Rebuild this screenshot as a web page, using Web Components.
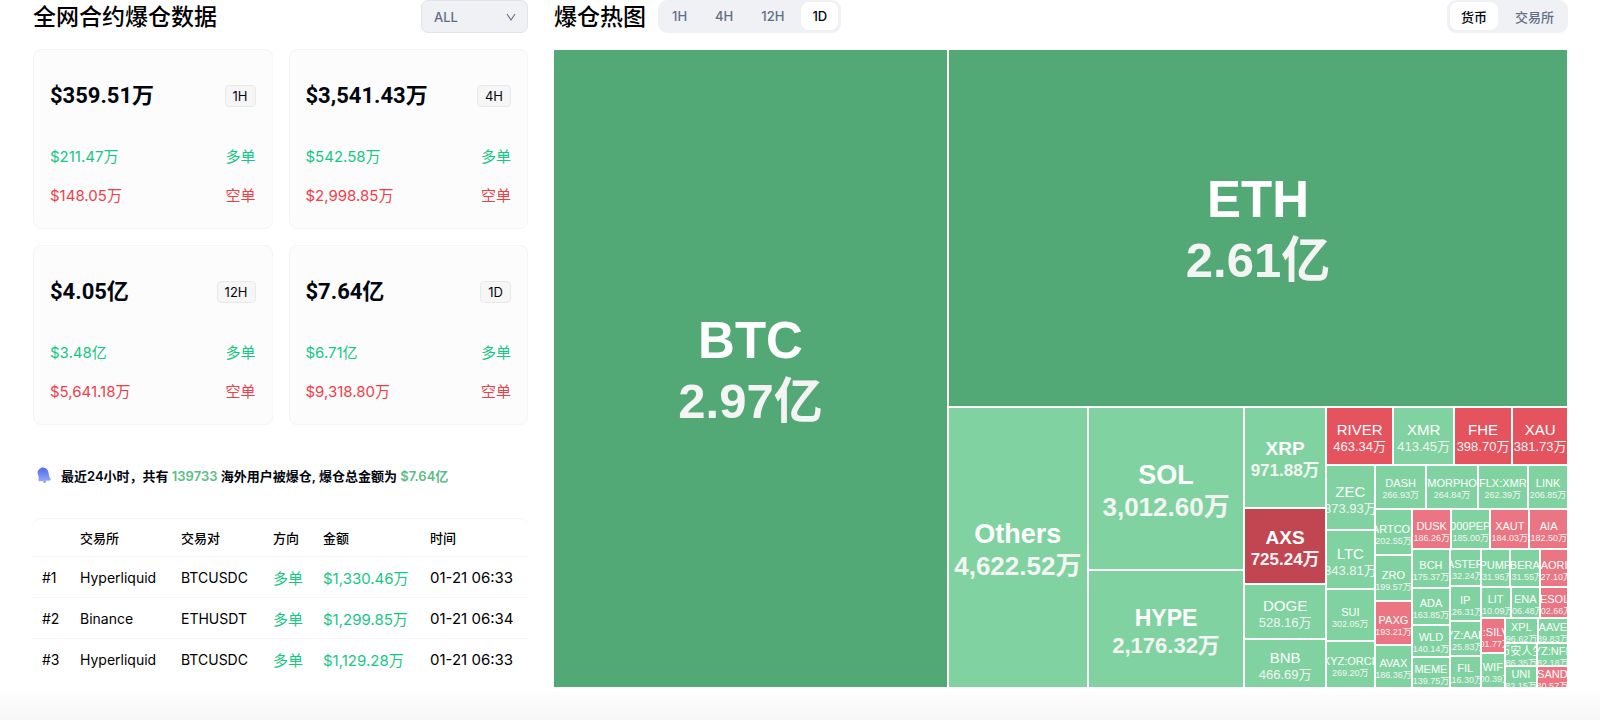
<!DOCTYPE html>
<html lang="zh-CN">
<head>
<meta charset="utf-8">
<meta name="viewport" content="width=device-width, initial-scale=1">
<title>爆仓数据</title>
<style>
html, body {
    margin: 0;
    height: 100%;
}
body {
    background: #fff;
    color: #02060f;
    font-family: Inter, "Noto Sans CJK SC", sans-serif;
    font-size: 14px;
    --up: #16c784;
    --down: #ef3e4a;
    --muted: #616e85;
    --panel: #eff1f5;
    --line: #f5f5f6;
}
</style>
</head>
<body>
<liq-page>
    <liq-panel slot="summary">
        <span slot="title">全网合约爆仓数据</span>
        <liq-select slot="end" label="币种" options="ALL,BTC,ETH,SOL"></liq-select>
        <liq-cards>
            <liq-card period="1H" long="$211.47万" short="$148.05万">$359.51万</liq-card>
            <liq-card period="4H" long="$542.58万" short="$2,998.85万">$3,541.43万</liq-card>
            <liq-card period="12H" long="$3.48亿" short="$5,641.18万">$4.05亿</liq-card>
            <liq-card period="1D" long="$6.71亿" short="$9,318.80万">$7.64亿</liq-card>
        </liq-cards>
        <liq-notice>最近24小时，共有 <b>139733</b> 海外用户被爆仓, 爆仓总金额为 <b>$7.64亿</b></liq-notice>
        <liq-orders></liq-orders>
    </liq-panel>
    <liq-panel slot="heatmap">
        <span slot="title">爆仓热图</span>
        <liq-tabs slot="start" options="1H,4H,12H,1D" selected="1D"></liq-tabs>
        <liq-tabs slot="end" options="货币,交易所" selected="货币"></liq-tabs>
        <liq-heatmap></liq-heatmap>
    </liq-panel>
</liq-page>

<script>
"use strict"

/* Attach an open shadow root filled with the given markup. */
function shadow(el, html) {
    const template = document.createElement('template');
    template.innerHTML = html;
    const root = el.attachShadow({ mode: 'open' });
    root.appendChild(template.content.cloneNode(true));
    return root;
}

/* Page: summary on the left, heatmap on the right. */
customElements.define('liq-page', class extends HTMLElement {
    constructor() {
        super();
        shadow(this, `
<style>
:host {
    display: grid;
    grid-template-columns: minmax(0, 495fr) minmax(0, 1014fr);
    gap: 26px;
    box-sizing: border-box;
    min-height: 100vh;
    padding: 0 32px 32px 33px;
    background: linear-gradient(to top, #f6f6f6, #fff 32px);
}
</style>
<slot name="summary"></slot>
<slot name="heatmap"></slot>
`);
    }
});

/* Panel: heading row with controls, content below. */
customElements.define('liq-panel', class extends HTMLElement {
    constructor() {
        super();
        shadow(this, `
<style>
:host {
    display: flex;
    flex-direction: column;
    gap: 16px;
}
header {
    display: flex;
    align-items: center;
    height: 33px;
    gap: 12px;
}
h2 {
    margin: 0;
    font-size: 23px;
    line-height: 32px;
    font-weight: 500;
    color: #000;
}
.space {
    flex: 1;
}
</style>
<header>
    <h2><slot name="title"></slot></h2>
    <slot name="start"></slot>
    <div class="space"></div>
    <slot name="end"></slot>
</header>
<slot></slot>
`);
    }
});

customElements.define('liq-select', class extends HTMLElement {
    constructor() {
        super();
        const root = shadow(this, `
<style>
:host {
    display: block;
}
label {
    display: grid;
    align-items: center;
}
select, svg {
    grid-area: 1 / 1;
}
select {
    appearance: none;
    width: 107px;
    height: 33px;
    padding: 0 12px;
    border: 1px solid #e2e4e9;
    border-radius: 7px;
    background: var(--panel);
    color: var(--muted);
    font: 500 13px Inter, sans-serif;
}
svg {
    justify-self: end;
    margin-right: 12px;
    pointer-events: none;
}
</style>
<label>
    <select></select>
    <svg width="10" height="8" viewBox="0 0 10 8" fill="none" stroke="#616e85" stroke-width="1.1"><path d="M1 1 5 7 9 1"/></svg>
</label>
`);
        const select = root.querySelector('select');
        select.setAttribute('aria-label', this.getAttribute('label'));
        this.getAttribute('options').split(',').forEach(o => select.add(new Option(o)));
    }
});

customElements.define('liq-tabs', class extends HTMLElement {
    constructor() {
        super();
        const root = shadow(this, `
<style>
:host {
    display: flex;
    gap: 6px;
    padding: 2px 3px 3px;
    border-radius: 9px;
    background: var(--panel);
}
button {
    height: 28px;
    padding: 0 11px;
    border: 0;
    border-radius: 8px;
    background: none;
    color: var(--muted);
    font: 500 13px Inter, "Noto Sans CJK SC", sans-serif;
    cursor: pointer;
}
button[aria-pressed=true] {
    background: #fff;
    color: #02060f;
}
</style>
`);
        this.getAttribute('options').split(',').forEach(text => {
            const button = document.createElement('button');
            button.type = 'button';
            button.textContent = text;
            button.setAttribute('aria-pressed', text === this.getAttribute('selected'));
            button.addEventListener('click', () => {
                root.querySelectorAll('button').forEach(b => b.setAttribute('aria-pressed', b === button));
            });
            root.appendChild(button);
        });
    }
});

customElements.define('liq-cards', class extends HTMLElement {
    constructor() {
        super();
        shadow(this, `
<style>
:host {
    display: grid;
    grid-template-columns: 1fr 1fr;
    gap: 16px;
}
</style>
<slot></slot>
`);
    }
});

/* Card: total of one period, split into longs and shorts. */
customElements.define('liq-card', class extends HTMLElement {
    constructor() {
        super();
        const root = shadow(this, `
<style>
:host {
    display: flex;
    flex-direction: column;
    box-sizing: border-box;
    padding: 28px 16px 14px;
    border: 1px solid var(--line);
    border-radius: 8px;
    background: #fcfcfc;
}
div {
    display: flex;
    align-items: center;
    justify-content: space-between;
    height: 39px;
    font-size: 15px;
}
.total {
    height: 36px;
    margin-bottom: 22px;
}
strong {
    font: 700 22px/36px Roboto, "Noto Sans CJK SC", sans-serif;
}
.period {
    padding: 0 7px;
    border: 1px solid #e9e9ea;
    border-radius: 4px;
    background: #f6f6f6;
    font-size: 13px;
    line-height: 20px;
}
.long {
    color: var(--up);
}
.short {
    color: var(--down);
}
</style>
<div class="total"><strong><slot></slot></strong><span class="period"></span></div>
<div class="long"><span></span><span>多单</span></div>
<div class="short"><span></span><span>空单</span></div>
`);
        root.querySelector('.period').textContent = this.getAttribute('period');
        root.querySelector('.long span').textContent = this.getAttribute('long');
        root.querySelector('.short span').textContent = this.getAttribute('short');
    }
});

customElements.define('liq-notice', class extends HTMLElement {
    constructor() {
        super();
        shadow(this, `
<style>
:host {
    display: flex;
    align-items: center;
    gap: 10px;
    height: 38px;
    margin-top: 15px;
    padding-left: 4px;
    font-size: 13px;
    font-weight: 600;
    white-space: nowrap;
}
::slotted(b) {
    color: #5bbd85;
    font-weight: 600;
}
</style>
<svg width="14" height="16" viewBox="0 0 14 16">
    <defs><linearGradient id="g" x1="0" y1="0" x2="0" y2="1"><stop offset="0" stop-color="#4a68ef"/><stop offset="1" stop-color="#93a6fb"/></linearGradient></defs>
    <path fill="url(#g)" d="M.6 6C.4 3.500 2.200 1.800 4 1.300 4.300 0 6.200-.2 6.700.8 9.500 1.300 11 3 11.500 5.500L12.200 9.500 13.700 12.300C13.900 12.900 13.500 13.300 13 13.400L2.400 14.200C1.800 14.200 1.400 13.700 1.500 13L1.700 10Z"/>
    <path fill="#4a68ef" d="M6 14.400 9 14.200C8.800 16 6.500 16.200 6 14.400Z"/>
</svg>
<span><slot></slot></span>
`);
    }
});

customElements.define('liq-orders', class extends HTMLElement {
    constructor() {
        super();
        const root = shadow(this, `
<style>
:host {
    display: block;
    margin-top: 8px;
    border-top: 1px solid var(--line);
    border-radius: 8px;
}
table {
    width: 100%;
    table-layout: fixed;
    border-collapse: collapse;
    color: #000;
}
th, td {
    height: 40px;
    padding: 0 0 0 9px;
    border-bottom: 1px solid var(--line);
    text-align: left;
    font-weight: 400;
    white-space: nowrap;
}
th {
    height: 37px;
    font-size: 13px;
    font-weight: 500;
}
tbody tr:last-child td {
    border-bottom: 0;
}
.up {
    color: var(--up);
}
.up, .time {
    font-size: 15px;
}
</style>
<table>
    <colgroup><col style="width: 38px"><col style="width: 101px"><col style="width: 92px"><col style="width: 50px"><col style="width: 107px"><col></colgroup>
    <thead><tr><th></th><th>交易所</th><th>交易对</th><th>方向</th><th>金额</th><th>时间</th></tr></thead>
    <tbody></tbody>
</table>
`);
        const rows = [
            ['#1', 'Hyperliquid', 'BTCUSDC', '多单', '$1,330.46万', '01-21 06:33'],
            ['#2', 'Binance', 'ETHUSDT', '多单', '$1,299.85万', '01-21 06:34'],
            ['#3', 'Hyperliquid', 'BTCUSDC', '多单', '$1,129.28万', '01-21 06:33']
        ];
        const classes = ['', '', '', 'up', 'up', 'time'];
        const body = root.querySelector('tbody');
        rows.forEach(row => {
            const tr = body.insertRow();
            row.forEach((text, i) => {
                const td = tr.insertCell();
                td.textContent = text;
                td.className = classes[i];
            });
        });
    }
});

/* Treemap: nested flex boxes, each one grows by its amount (in 万). */
{
    const row = (...items) => ({ dir: 'row', items });
    const col = (...items) => ({ dir: 'column', items });
    const up = (name, value) => ({ name, value, tone: value > 20000 ? 'up-strong' : 'up' });
    const down = (name, value) => ({ name, value, tone: value > 600 ? 'down-strong' : value > 300 ? 'down' : 'down-weak' });

    const tree = row(
        up('BTC', 29700),
        col(
            up('ETH', 26100),
            row(
                up('Others', 4622.52),
                col(up('SOL', 3012.60), up('HYPE', 2176.32)),
                col(up('XRP', 971.88), down('AXS', 725.24), up('DOGE', 528.16), up('BNB', 466.69)),
                col(
                    row(down('RIVER', 463.34), up('XMR', 413.45), down('FHE', 398.70), down('XAU', 381.73)),
                    row(
                        col(up('ZEC', 373.93), up('LTC', 343.81), up('SUI', 302.05), up('XYZ:ORCL', 269.20)),
                        col(
                            row(up('DASH', 266.93), up('MORPHO', 264.84), up('FLX:XMR', 262.39), up('LINK', 206.85)),
                            row(
                                col(up('FARTCOIN', 202.55), up('ZRO', 199.57), down('PAXG', 193.21), up('AVAX', 186.36)),
                                col(
                                    row(down('DUSK', 186.26), up('1000PEPE', 185.00), down('XAUT', 184.03), down('AIA', 182.50)),
                                    row(
                                        col(up('BCH', 175.37), up('ADA', 163.85), up('WLD', 140.14), up('MEME', 139.75)),
                                        col(up('ASTER', 132.24), up('IP', 126.31), up('XYZ:AAPL', 125.83), up('FIL', 116.30)),
                                        col(
                                            row(up('PUMP', 131.95), up('BERA', 131.55), down('NAORIS', 127.10)),
                                            row(up('LIT', 110.09), up('ENA', 106.48), down('RESOLV', 102.66)),
                                            row(
                                                col(down('XYZ:SILVER', 101.77), up('WIF', 100.39)),
                                                col(
                                                    row(up('XPL', 96.62), up('AAVE', 89.83)),
                                                    row(up('币安人生', 86.35), up('XYZ:NFLX', 82.18)),
                                                    row(up('UNI', 82.15), down('SAND', 80.57))
                                                )
                                            )
                                        )
                                    )
                                )
                            )
                        )
                    )
                )
            )
        )
    );

    const total = node => node.items ? node.items.reduce((sum, n) => sum + total(n), 0) : node.value;

    function format(value) {
        if (value >= 10000) return (value / 10000).toFixed(2) + '亿';
        return value.toLocaleString('en-US', { minimumFractionDigits: 2 }) + '万';
    }

    function sizeOf(value) {
        if (value >= 10000) return 'xl';
        if (value >= 3000) return 'l';
        if (value >= 2000) return 'm';
        if (value >= 600) return 's';
        return value >= 310 ? 'xs' : 'xxs';
    }

    function build(node) {
        const el = document.createElement('div');
        el.style.flexGrow = Math.round(total(node));
        if (node.items) {
            el.className = 'group';
            el.style.flexDirection = node.dir;
            node.items.forEach(n => el.appendChild(build(n)));
            return el;
        }
        el.className = 'cell ' + node.tone + ' ' + sizeOf(node.value);
        const name = document.createElement('span');
        const value = document.createElement('span');
        name.textContent = node.name;
        value.textContent = format(node.value);
        name.className = 'name';
        value.className = 'value';
        el.append(name, value);
        return el;
    }

    customElements.define('liq-heatmap', class extends HTMLElement {
        constructor() {
            super();
            const root = shadow(this, `
<style>
:host {
    display: flex;
    flex: 1;
    min-height: 480px;
    margin-left: -1px;
    font-family: "Liberation Sans", "Noto Sans CJK SC", sans-serif;
    color: #fff;
}
.group, .cell {
    display: flex;
    flex-basis: 0;
    min-width: 0;
    min-height: 0;
}
/* The gutter is an inset line, so that it takes no share of the area. */
.cell {
    flex-direction: column;
    align-items: center;
    justify-content: center;
    box-shadow: inset 0 0 0 1px #fff;
    overflow: hidden;
    white-space: nowrap;
}
.name { margin-top: 5px; }
.value { color: #f4f4f4; }
.up-strong { background: #52a975; }
.up { background: #80d3a1; }
.down-strong { background: #c14652; }
.down { background: #e5535f; }
.down-weak { background: #eb7582; }
.xl, .l, .m, .s { font-weight: 700; }
.xl { font-size: 51px; line-height: 61px; }
.xl .value { font-size: 49px; }
.l { font-size: 27px; line-height: 32px; }
.l .value { font-size: 26px; }
.m { font-size: 23px; line-height: 28px; }
.m .value { font-size: 22px; }
.s { font-size: 19px; line-height: 22px; }
.s .value { font-size: 17px; }
.xs { font-size: 15px; line-height: 17px; }
.xs .value { font-size: 13px; }
.xxs { font-size: 11px; line-height: 12px; }
.xxs .value { font-size: 9px; }
</style>
`);
            root.appendChild(build(tree));
        }
    });
}
</script>
</body>
</html>
